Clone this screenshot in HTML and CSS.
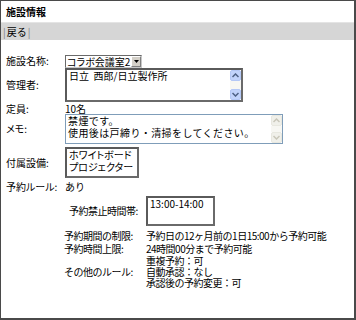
FILE: index.html
```html
<!DOCTYPE html>
<html>

<head>
  <meta charset="utf-8">
  <meta name="viewport" content="width=device-width">
  <title>施設情報</title>
  <link rel="stylesheet" href="styles.css">
</head>

<body>
  <div class="page">
    <div class="title">施設情報</div>
    <div class="toolbar"><span class="sep">|</span>戻る<span class="sep">|</span></div>

    <div class="form">
      <div class="label row-select">施設名称:</div>
      <div class="value row-select">
        <div class="select">
          <span class="select-text">コラボ会議室2</span>
          <span class="select-btn">
            <svg width="5" height="3" viewBox="0 0 5 3"><path d="M0 0h5L2.5 3z" fill="#000"/></svg>
          </span>
        </div>
      </div>

      <div class="label row-admin">管理者:</div>
      <div class="value row-admin">
        <div class="box box-inset box-admin">
          <div class="box-text">日立&nbsp;&nbsp;西郎/日立製作所</div>
          <div class="scroll">
            <span class="scroll-btn xp"><svg width="7" height="5" viewBox="0 0 7 5"><path d="M0.5 4L3.5 1L6.5 4" fill="none" stroke="#4d6185" stroke-width="1.5"/></svg></span>
            <span class="scroll-track"></span>
            <span class="scroll-btn xp"><svg width="7" height="5" viewBox="0 0 7 5"><path d="M0.5 1L3.5 4L6.5 1" fill="none" stroke="#4d6185" stroke-width="1.5"/></svg></span>
          </div>
        </div>
      </div>

      <div class="label row-text">定員:</div>
      <div class="value row-text">10名</div>

      <div class="label row-memo prop">メモ:</div>
      <div class="value row-memo">
        <div class="box box-memo">
          <div class="box-text memo-text">禁煙です。<br>使用後は戸締り・清掃をしてください。</div>
          <div class="scroll">
            <span class="scroll-btn off"><svg width="7" height="5" viewBox="0 0 7 5"><path d="M0.5 4L3.5 1L6.5 4" fill="none" stroke="#c9c7ba" stroke-width="1.5"/></svg></span>
            <span class="scroll-track"></span>
            <span class="scroll-btn off"><svg width="7" height="5" viewBox="0 0 7 5"><path d="M0.5 1L3.5 4L6.5 1" fill="none" stroke="#c9c7ba" stroke-width="1.5"/></svg></span>
          </div>
        </div>
      </div>

      <div class="label row-equip">付属設備:</div>
      <div class="value row-equip">
        <div class="box box-inset box-equip">
          <div class="box-text prop">ホワイトボード<br>プロジェクター</div>
        </div>
      </div>

      <div class="label row-text prop">予約ルール:</div>
      <div class="value row-text">あり</div>
    </div>

    <div class="rules">
      <div class="label row-ban ban-label">予約禁止時間帯:</div>
      <div class="value row-ban">
        <div class="box box-inset box-time">
          <div class="box-text">13:00-14:00</div>
        </div>
      </div>

      <div class="label row-rule">予約期間の制限:</div>
      <div class="value row-rule">予約日の12ヶ月前の1日15:00から予約可能</div>

      <div class="label row-rule">予約時間上限:</div>
      <div class="value row-rule">24時間00分まで予約可能</div>

      <div class="label row-other">その他のルール:</div>
      <div class="value row-other">
        重複予約：可<br>
        自動承認：なし<br>
        承認後の予約変更：可
      </div>
    </div>
  </div>
</body>

</html>
```

FILE: styles.css
```css
body {
  margin: 0;
  font-family: "MS PGothic", "Noto Sans CJK JP", sans-serif;
  font-size: 10px;
  color: #000;
  background-color: #fff;
}

/* カタカナの多い文字は詰める */
.prop {
  font-feature-settings: "palt";
}

.page {
  width: 356px;
  height: 320px;
  box-sizing: border-box;
  border: 1px solid #4a4a4a;
  border-right-width: 2px;
  border-bottom-width: 2px;
  overflow: hidden;
}

.title {
  height: 21px;
  line-height: 22px;
  padding-left: 5px;
  font-weight: bold;
}

.toolbar {
  height: 17px;
  line-height: 17px;
  padding-left: 1px;
  background-color: #d6d6d6;
  border-top: 1px solid #e4e4e4;
}

.sep {
  color: #808080;
  margin: 0 1px;
}

/* フォーム部分 */
.form {
  display: grid;
  grid-template-columns: 59px auto;
  padding: 14px 0 0 5px;
}

.rules {
  display: grid;
  grid-template-columns: 82px auto;
  padding: 0 0 0 63px;
  letter-spacing: -0.5px;
}

.label,
.value {
  display: flex;
  align-items: center;
  line-height: 12px;
}

.row-select { height: 14px; }
.row-admin { height: 34px; }
.row-text { height: 13px; padding-top: 1px; box-sizing: border-box; }
.row-memo { height: 30px; margin-top: -1px; margin-bottom: 3px; }
.row-equip { height: 31px; margin-bottom: 2px; }
.row-ban { height: 36px; }
.row-rule { height: 13px; }
.row-other { height: 34px; }

.ban-label {
  padding-left: 5px;
}

.row-ban.value {
  align-items: flex-start;
}

.row-ban .box {
  margin-top: 3px;
}

.row-other.value {
  display: block;
  line-height: 11px;
}

/* セレクト */
.select {
  display: flex;
  width: 77px;
  height: 13px;
  box-sizing: border-box;
  border: 1px solid #6a6a6a;
  border-right-color: #c8c8c8;
  border-bottom-color: #c8c8c8;
  background-color: #fff;
}

.select-text {
  flex: 1;
  line-height: 11px;
  padding-left: 1px;
  white-space: nowrap;
  font-feature-settings: "palt";
}

.select-btn {
  display: flex;
  align-items: center;
  justify-content: center;
  width: 10px;
  background-color: #d4d0c8;
  border: 1px solid #fff;
  border-right-color: #808080;
  border-bottom-color: #808080;
  box-sizing: border-box;
}

/* テキストエリア */
.box {
  display: flex;
  box-sizing: border-box;
  background-color: #fff;
}

.box-text {
  flex: 1;
  line-height: 12px;
  padding: 0 2px;
  white-space: nowrap;
  letter-spacing: 0;
}

.memo-text {
  letter-spacing: 0.4px;
}

.box-inset {
  border: 2px solid #5a5a5a;
  border-right-color: #6a6a6a;
  border-bottom-color: #6a6a6a;
}

.box-admin {
  width: 178px;
  height: 34px;
}

.box-memo {
  width: 218px;
  height: 30px;
  border: 1px solid #7f9db9;
}

.box-equip {
  width: 74px;
  height: 31px;
}

.box-time {
  width: 69px;
  height: 30px;
}

/* スクロールバー */
.scroll {
  display: flex;
  flex-direction: column;
  width: 11px;
}

.scroll-track {
  flex: 1;
  background-color: #f7f7f3;
}

.scroll-btn {
  display: flex;
  align-items: center;
  justify-content: center;
  height: 11px;
  box-sizing: border-box;
}

.scroll-btn.xp {
  background-color: #c1d3fb;
  border: 1px solid #b4c8f6;
  border-radius: 2px;
}

.scroll-btn.off {
  background-color: #f0f0ea;
  border: 1px solid #e8e8e0;
  border-radius: 2px;
}
```
